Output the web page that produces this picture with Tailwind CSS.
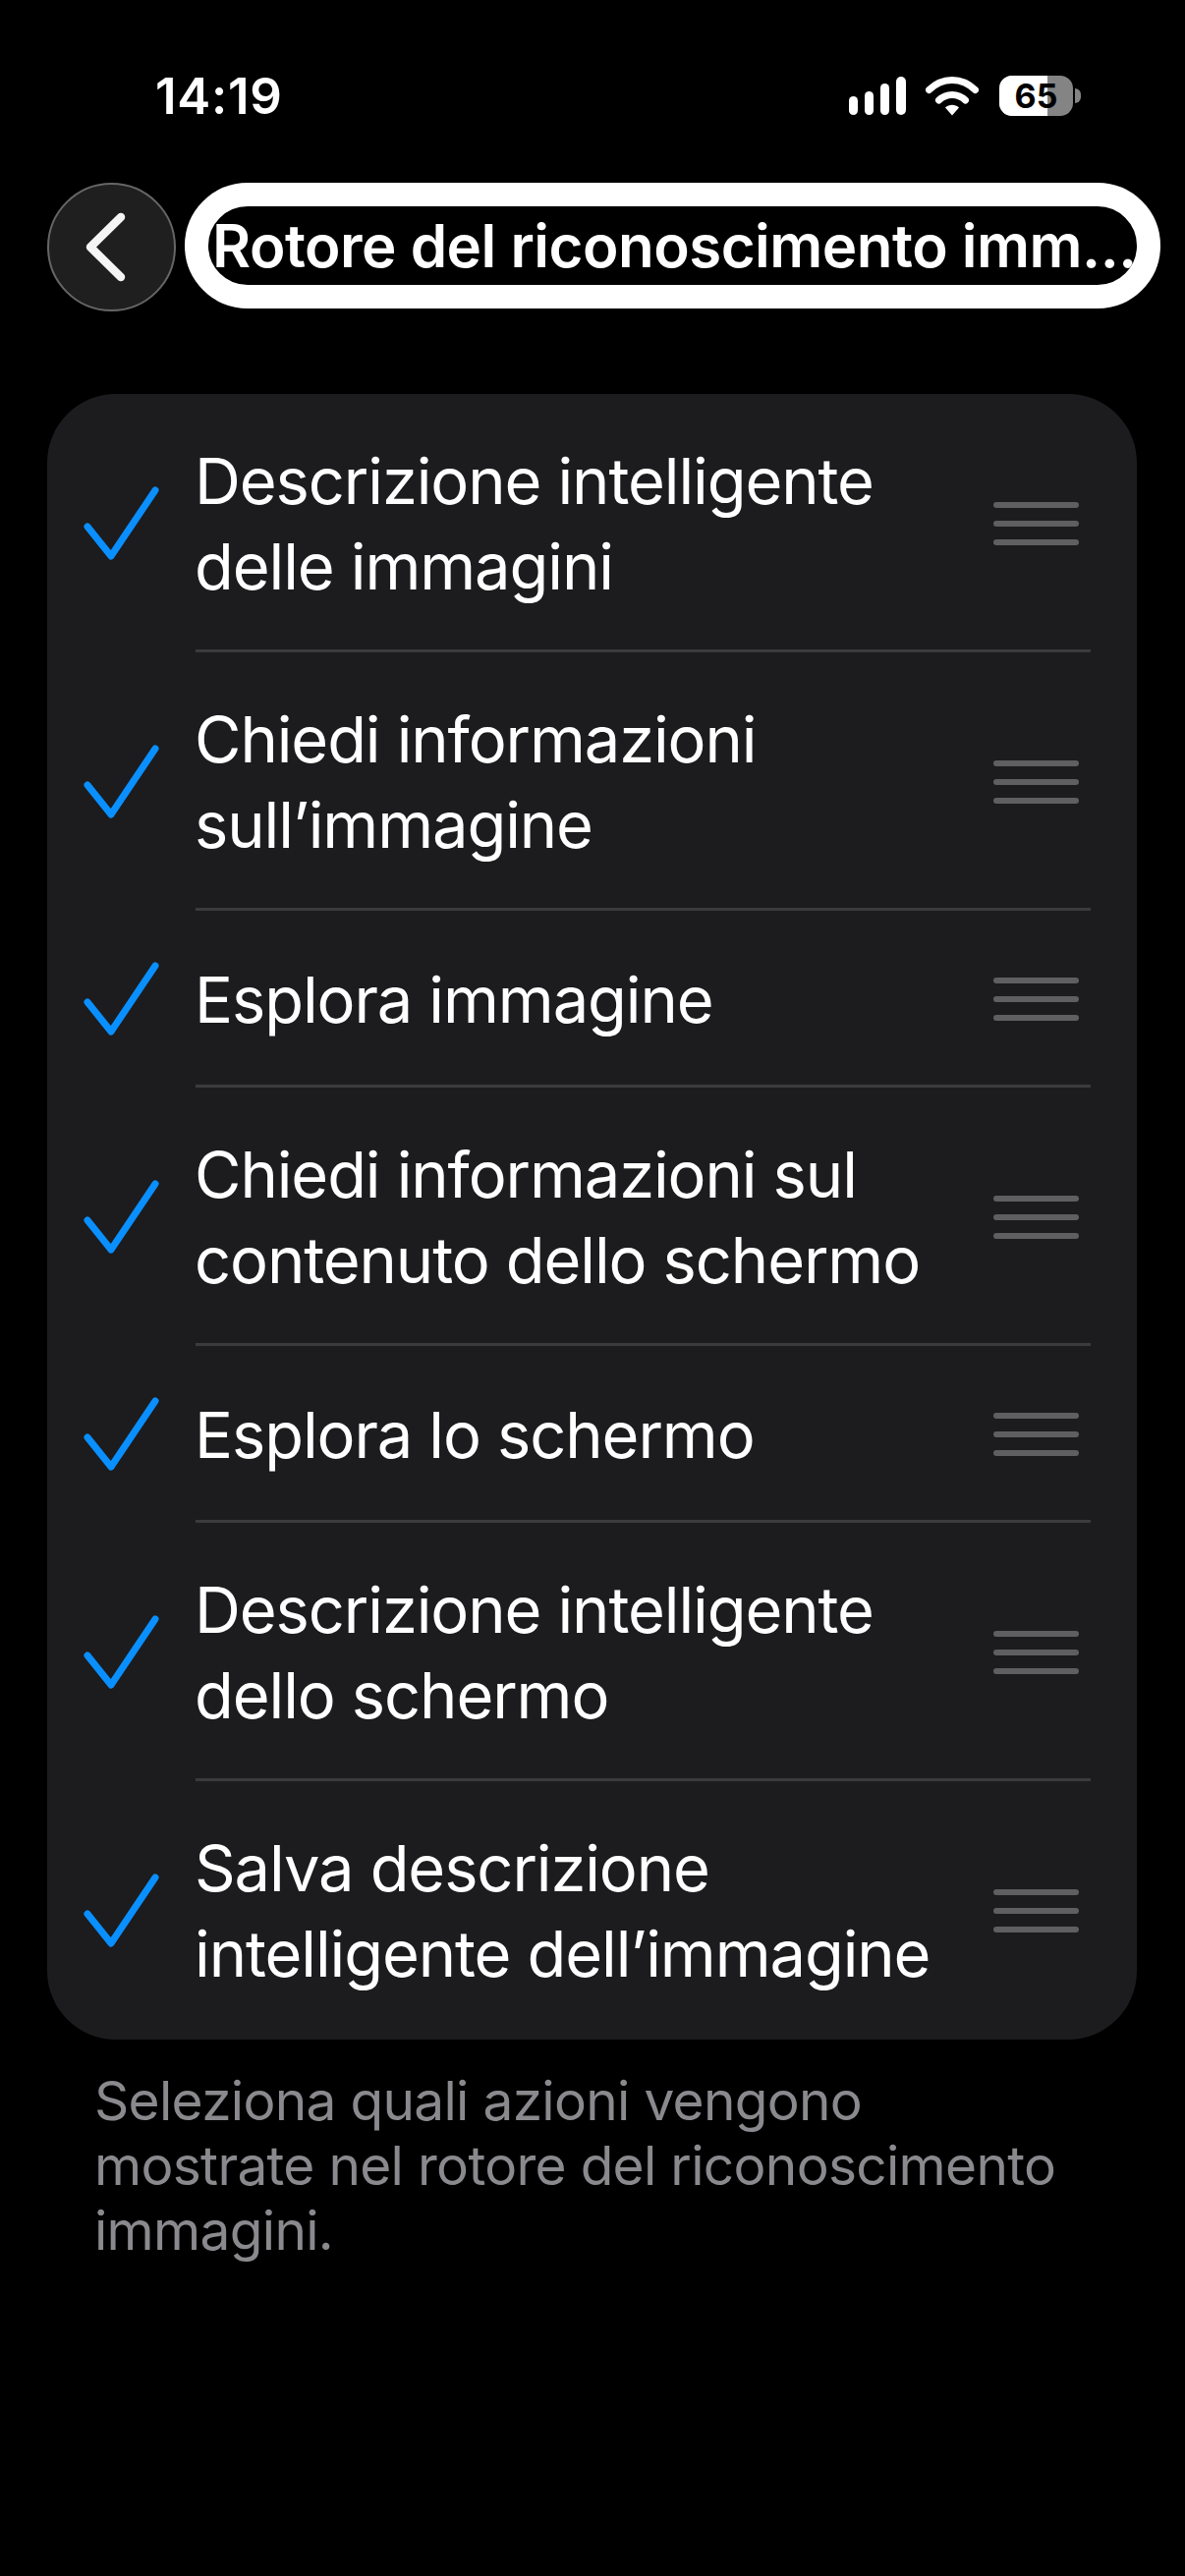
<!DOCTYPE html>
<html lang="it">
  <head>
    <meta charset="UTF-8" />
    <meta name="viewport" content="width=device-width, initial-scale=1.0" />
    <title>Rotore del riconoscimento immagini</title>
    <script src="https://cdn.jsdelivr.net/npm/@tailwindcss/browser@4"></script>
  </head>
  <body class="bg-black text-white font-['Inter',sans-serif]">
    <div class="w-[1206px] h-[2622px] overflow-hidden">
      <!-- status bar -->
      <div class="flex items-center justify-between h-[41px] mt-[77px] pl-[158px] pr-[106px]">
        <span class="text-[51px] font-semibold leading-none tracking-[0.7px]">14:19</span>
        <div class="flex items-center">
          <svg width="58" height="40" viewBox="0 0 58 40" fill="#fff">
            <rect x="0" y="20" width="9" height="19" rx="4.5" />
            <rect x="16" y="15" width="9" height="24" rx="4.5" />
            <rect x="32" y="7" width="9" height="32" rx="4.5" />
            <rect x="48" y="0" width="10" height="39" rx="5" />
          </svg>
          <svg class="ml-[20px]" width="54" height="41" viewBox="0 0 54 41" fill="none" stroke="#fff" stroke-width="7" stroke-linecap="round">
            <path d="M3.5 14.5C17 1 37 1 50.500 14.500" />
            <path d="M13.500 25C21 17.500 33 17.500 40.500 25" />
            <path d="M20 32.500L27 40.500L34 32.500C30 28.800 24 28.800 20 32.500Z" fill="#fff" stroke="none" />
          </svg>
          <div class="relative ml-[21px] w-[75px] h-[41px] rounded-[13px] overflow-hidden bg-[#848484]">
            <div class="w-[49px] h-full bg-white"></div>
            <span class="absolute inset-0 flex items-center justify-center text-black text-[34px] font-bold leading-none">65</span>
          </div>
          <div class="ml-[2px] w-[6px] h-[15px] rounded-r-full bg-[#848484]"></div>
        </div>
      </div>

      <!-- nav -->
      <div class="flex items-start mt-[68px] pl-[48px]">
        <div class="flex items-center justify-center w-[131px] h-[131px] rounded-full bg-[#1f1f1f] border-2 border-[#666]">
          <svg class="mr-[12px]" width="41" height="71" viewBox="0 0 41 71" fill="none" stroke="#f5f5f5" stroke-width="8.5" stroke-linecap="round" stroke-linejoin="round">
            <path d="M36 5L5 35.500L36 66" />
          </svg>
        </div>
        <div class="ml-[9px] w-[993px] h-[128px] border-[24px] border-white rounded-[64px] bg-black flex items-center overflow-hidden">
          <span class="ml-[4px] text-[60px] font-semibold whitespace-nowrap tracking-[-0.5px]">Rotore del riconoscimento imm...</span>
        </div>
      </div>

      <!-- list -->
      <div id="list" class="mt-[84px] ml-[48px] w-[1109px] rounded-[70px] bg-[#1c1c1e]"></div>

      <p class="mt-[29px] ml-[96px] w-[1000px] text-[55px] leading-[66px] tracking-[-0.7px] text-[#8a8a8e]">Seleziona quali azioni vengono mostrate nel rotore del riconoscimento immagini.</p>
    </div>

    <script>
      const items = [
        ["Descrizione intelligente", "delle immagini"],
        ["Chiedi informazioni", "sull’immagine"],
        ["Esplora immagine"],
        ["Chiedi informazioni sul", "contenuto dello schermo"],
        ["Esplora lo schermo"],
        ["Descrizione intelligente", "dello schermo"],
        ["Salva descrizione", "intelligente dell’immagine"],
      ];

      const list = document.getElementById("list");
      items.forEach((lines, i) => {
        const last = i === items.length - 1;
        const pad = lines.length > 1 ? "pt-[45px] pb-[41px]" : "pt-[47px] pb-[43px]";
        const row = document.createElement("div");
        row.className = "flex items-center";
        row.innerHTML = `
          <svg class="ml-[37px] shrink-0" width="77" height="76" viewBox="0 0 77 76" fill="none" stroke="#0a8fff" stroke-width="7" stroke-linecap="round" stroke-linejoin="round">
            <path d="M4 41L28 71L73 4" />
          </svg>
          <div class="ml-[35px] flex-1 relative">
            <div class="${pad} pl-[1px] text-[65px] font-[370] leading-[87px] tracking-[-1.1px]">${lines.map((l) => `<div class="whitespace-nowrap">${l}</div>`).join("")}</div>
            <div class="h-[3px] ml-[2px] mr-[47px] ${last ? "" : "bg-[#3b3b3d]"}"></div>
            <div class="absolute right-[59px] top-1/2 -translate-y-1/2 flex flex-col gap-[13px]">
              <div class="w-[87px] h-[6px] rounded-full bg-[#5f5f61]"></div>
              <div class="w-[87px] h-[6px] rounded-full bg-[#5f5f61]"></div>
              <div class="w-[87px] h-[6px] rounded-full bg-[#5f5f61]"></div>
            </div>
          </div>`;
        list.appendChild(row);
      });
    </script>
  </body>
</html>
